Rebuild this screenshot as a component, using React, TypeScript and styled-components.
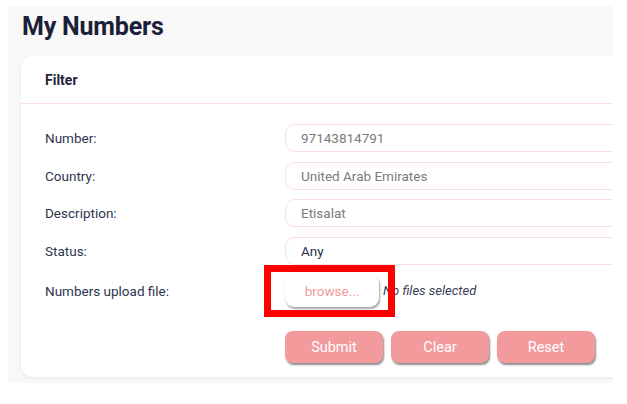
import * as React from "react";
import styled, { createGlobalStyle } from "styled-components";

const GlobalStyle = createGlobalStyle`
  html, body {
    margin: 0;
    padding: 0;
    background: #ffffff;
  }
  body {
    padding: 6px 0 0 8px;
    font-family: Roboto, "Liberation Sans", sans-serif;
  }
`;

/* =========================
 * Layout
 * ========================= */

const Page = styled.div`
  width: 605px;
  height: 377px;
  background-color: #f8f8f8;
  overflow: hidden;
  box-sizing: border-box;
  padding: 0 0 0 13px;
`;

const Title = styled.h1`
  margin: 0;
  padding: 6px 0 0 1px;
  height: 50px;
  box-sizing: border-box;
  font-size: 25px;
  font-weight: 700;
  letter-spacing: -0.2px;
  color: #1b2036;
`;

const Card = styled.div`
  width: 700px;
  background-color: #ffffff;
  border-radius: 12px;
  box-shadow: 0 1px 3px rgba(0, 0, 0, 0.08);
`;

const CardHeader = styled.div`
  height: 47px;
  display: flex;
  align-items: center;
  padding: 0 24px;
  border-bottom: 1px solid #fde2e2;
  font-size: 14px;
  font-weight: 700;
  color: #1f2540;
`;

const CardBody = styled.div`
  padding: 20px 0 14px 24px;
  display: flex;
  flex-direction: column;
`;

const FormRow = styled.div<{ $height?: number }>`
  display: grid;
  grid-template-columns: 240px 1fr;
  align-items: center;
  height: ${({ $height }) => $height ?? 28}px;
  margin-bottom: 9.5px;
`;

const Label = styled.label`
  font-size: 13.5px;
  color: #2d3550;
`;

const Field = styled.div<{ $dark?: boolean }>`
  height: 28px;
  box-sizing: border-box;
  border: 1px solid #fbe1e1;
  border-radius: 10px;
  padding: 0 15px;
  display: flex;
  align-items: center;
  font-size: 13.5px;
  color: ${({ $dark }) => ($dark ? "#2a2f45" : "#7b7b7b")};
`;

const FileWrap = styled.div`
  position: relative;
  display: flex;
  align-items: center;
  gap: 4px;
`;

const BrowseButton = styled.button`
  width: 94px;
  height: 33px;
  border: none;
  border-radius: 9px;
  background: #ffffff;
  box-shadow: 1px 2px 2px rgba(0, 0, 0, 0.35), 0 0 1px rgba(0, 0, 0, 0.15);
  color: #f29a9c;
  font-family: inherit;
  font-size: 13.5px;
  cursor: pointer;
`;

const FileNote = styled.span`
  font-size: 13px;
  font-style: italic;
  color: #3a4058;
`;

/* red annotation frame drawn over the browse button */
const Highlight = styled.div`
  position: absolute;
  z-index: 2;
  left: -21px;
  top: -9px;
  width: 131px;
  height: 52px;
  box-sizing: border-box;
  border: 7px solid #ff0000;
  pointer-events: none;
`;

const Actions = styled.div`
  display: flex;
  gap: 8px;
  padding-left: 240px;
  margin-top: 14px;
`;

const ActionButton = styled.button`
  width: 98px;
  height: 32px;
  padding-top: 3px;
  border: none;
  border-radius: 8px;
  background-color: #f29a9c;
  box-shadow: 1px 2px 2px rgba(0, 0, 0, 0.45);
  color: #ffffff;
  font-family: inherit;
  font-size: 14.5px;
  cursor: pointer;
`;

/* =========================
 * Componente
 * ========================= */

const fields = [
  { label: "Number:", value: "97143814791" },
  { label: "Country:", value: "United Arab Emirates" },
  { label: "Description:", value: "Etisalat" },
  { label: "Status:", value: "Any", dark: true },
];

const App: React.FC = () => {
  return (
    <>
      <GlobalStyle />
      <Page>
        <Title>My Numbers</Title>
        <Card>
          <CardHeader>Filter</CardHeader>
          <CardBody>
            {fields.map((f) => (
              <FormRow key={f.label}>
                <Label>{f.label}</Label>
                <Field $dark={f.dark}>{f.value}</Field>
              </FormRow>
            ))}

            <FormRow $height={33}>
              <Label>Numbers upload file:</Label>
              <FileWrap>
                <BrowseButton>browse...</BrowseButton>
                <FileNote>No files selected</FileNote>
                <Highlight />
              </FileWrap>
            </FormRow>

            <Actions>
              <ActionButton>Submit</ActionButton>
              <ActionButton>Clear</ActionButton>
              <ActionButton>Reset</ActionButton>
            </Actions>
          </CardBody>
        </Card>
      </Page>
    </>
  );
};

export default App;
